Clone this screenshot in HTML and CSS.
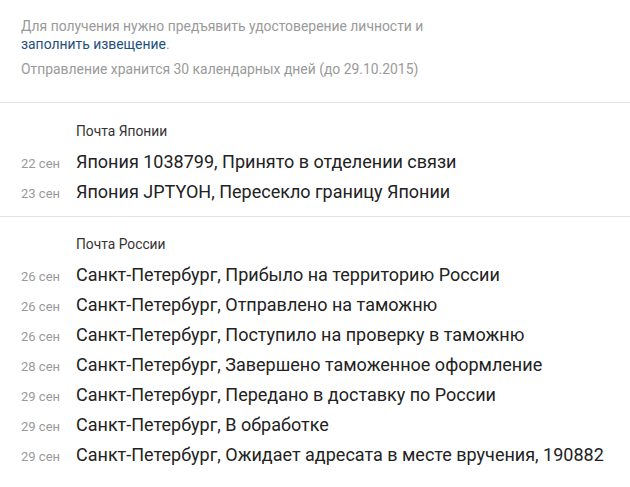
FILE: index.html
```html
<!DOCTYPE html>
<html lang="ru">
<head>
<meta charset="utf-8">
<link rel="stylesheet" href="styles.css">
</head>
<body>
<div class="info">
  <p class="note">Для получения нужно предъявить удостоверение личности и <a class="link" href="#">заполнить извещение</a>.</p>
  <p class="note storage">Отправление хранится 30 календарных дней (до 29.10.2015)</p>
</div>
<section class="group">
  <div class="group-title">Почта Японии</div>
  <div class="row"><span class="date">22 сен</span><span class="event">Япония 1038799, Принято в отделении связи</span></div>
  <div class="row"><span class="date">23 сен</span><span class="event">Япония JPTYOH, Пересекло границу Японии</span></div>
</section>
<section class="group">
  <div class="group-title">Почта России</div>
  <div class="row"><span class="date">26 сен</span><span class="event">Санкт-Петербург, Прибыло на территорию России</span></div>
  <div class="row"><span class="date">26 сен</span><span class="event">Санкт-Петербург, Отправлено на таможню</span></div>
  <div class="row"><span class="date">26 сен</span><span class="event">Санкт-Петербург, Поступило на проверку в таможню</span></div>
  <div class="row"><span class="date">28 сен</span><span class="event">Санкт-Петербург, Завершено таможенное оформление</span></div>
  <div class="row"><span class="date">29 сен</span><span class="event">Санкт-Петербург, Передано в доставку по России</span></div>
  <div class="row"><span class="date">29 сен</span><span class="event">Санкт-Петербург, В обработке</span></div>
  <div class="row"><span class="date">29 сен</span><span class="event">Санкт-Петербург, Ожидает адресата в месте вручения, 190882</span></div>
</section>
</body>
</html>
```
FILE: styles.css
```css
html, body {
  margin: 0;
  padding: 0;
  background: #fff;
  font-family: Roboto, "Liberation Sans", sans-serif;
}
.info {
  padding: 17px 21px 24px;
  width: 410px;
}
.note {
  margin: 0;
  font-size: 13.9px;
  line-height: 18px;
  color: #9a9a9a;
}
.storage {
  margin-top: 7px;
}
.link {
  color: #1e4f7d;
  text-decoration: none;
}
.group {
  border-top: 1px solid #e3e3e3;
  padding: 18px 0 9px;
}
.group + .group {
  padding-top: 17px;
}
.group-title {
  padding-left: 76px;
  font-size: 13.8px;
  line-height: 20px;
  color: #333;
  margin-bottom: 6px;
}
.row {
  display: flex;
  align-items: baseline;
  padding-left: 21px;
  height: 30px;
}
.date {
  width: 55px;
  flex: none;
  font-size: 13px;
  line-height: 30px;
  color: #9a9a9a;
}
.event {
  font-size: 18px;
  line-height: 30px;
  color: #222;
}
```
